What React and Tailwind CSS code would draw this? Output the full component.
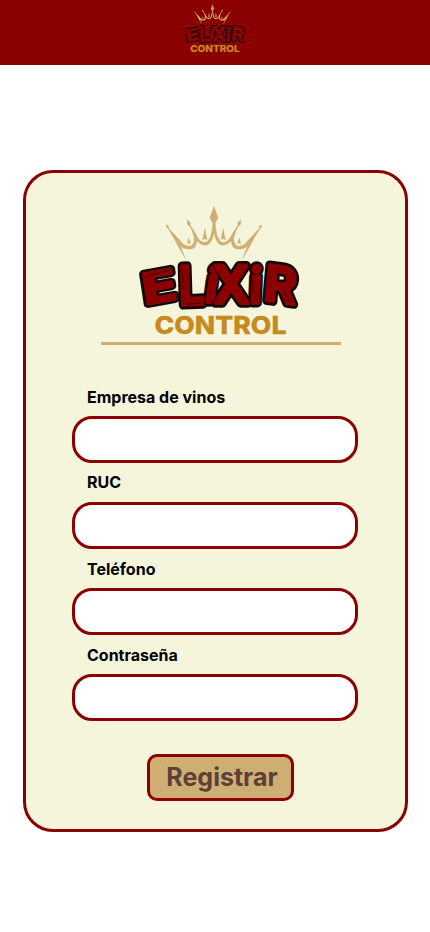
const letters = [
  { ch: 'E', m: 'matrix(1.1 -0.2 0.13 0.84 144.800 304.800)' },
  { ch: 'L', m: 'matrix(0.9 -0.04 0.03 1.06 179.500 305)' },
  { ch: 'i', m: 'matrix(0.9 -0.04 -0.14 0.96 203.500 302.500)' },
  { ch: 'X', m: 'matrix(1 0 0.02 1.03 213.500 303)' },
  { ch: 'R', m: 'matrix(0.98 0.14 -0.09 0.98 263 300)' },
  { ch: 'i', m: 'matrix(0.9 0 -0.04 0.98 249 303)' },
]

function HalfCrown() {
  return (
    <g strokeWidth="0.300" stroke="#cfae74">
      <path d="M167 226.500L180 240.500Q184 246 189 246.300Q194.500 246 194.200 238Q193 231 188.900 225L190 225Q195 232 198 238Q201 243 206 242.300Q210.500 240 212 230L213 222H214V233Q212 243 207 245Q202 246.300 198 242L196.800 241Q196.500 248.500 190.500 249.200Q184 249.500 180.500 246Q182.500 251 185.500 258.800L178 246Q174 238 167 227Z" />
      <path d="M166.600 224.800L168.800 226L168.300 228.300L166.500 227.300Z" />
      <path d="M187 219.500L190.600 223L189.700 226L187.400 224.500Z" />
      <path d="M214 206.500L209.800 217.800L213 223.500H214Z" />
      <path d="M204.900 228.500L207 239.500L204.700 238.700L202.500 240Z" />
      <path d="M188.500 238L190.800 243.500L189 243L187.300 243.800Z" />
    </g>
  )
}

function Logo({ className }) {
  return (
    <svg viewBox="138 205 164 132" className={`overflow-visible ${className}`} role="img" aria-label="Elixir Control">
      <g fill="#cfae74">
        <HalfCrown />
        <g transform="matrix(-1 0 0 1 428 0)">
          <HalfCrown />
        </g>
      </g>
      <g className="font-['Inter',sans-serif] font-semibold" fontSize="50" strokeLinejoin="round">
        <g fill="#120b09" stroke="#120b09" strokeWidth="9">
          {letters.map((l, i) => (
            <text key={i} transform={l.m} aria-hidden="true">{l.ch}</text>
          ))}
        </g>
        <g fill="#8b0000" stroke="#8b0000" strokeWidth="3.800">
          {letters.map((l, i) => (
            <g key={i}>
              <text transform={l.m} fill="#120b09" stroke="#120b09" strokeWidth="5.500" aria-hidden="true">{l.ch}</text>
              <text transform={l.m}>{l.ch}</text>
            </g>
          ))}
        </g>
      </g>
      <g fill="none" stroke="#120b09" strokeWidth="0.600" strokeLinecap="round">
        <path d="M147 276L170 270M182 270L184 290M187 304L200 303M206 281L206 295M253 281V292M283 291L290 301" />
      </g>
      <text x="154.500" y="333.600" fontSize="24.500" textLength="132" lengthAdjust="spacingAndGlyphs" fill="#c68a1e" stroke="#c68a1e" strokeWidth="0.300" className="font-['Inter',sans-serif] font-extrabold">CONTROL</text>
    </svg>
  )
}

function Field({ label, className, gap }) {
  return (
    <label className={`block ${className}`}>
      <span className="block pl-[15px] text-base leading-5 font-bold text-black">{label}</span>
      <input className={`block h-[47px] w-full rounded-[20px] border-3 border-[#8b0000] bg-white px-4 outline-none ${gap}`} />
    </label>
  )
}

export default function App() {
  return (
    <div className="min-h-screen bg-white font-['Inter',sans-serif]">
      <header className="flex h-[65px] justify-center bg-[#8b0000] pt-1">
        <Logo className="h-[49.500px] w-[61.500px]" />
      </header>
      <main className="mt-[105px] ml-[23px] flex h-[662px] w-[385px] flex-col rounded-[30px] border-3 border-[#8b0000] bg-[#f5f5dc] pt-8">
        <Logo className="ml-28 h-[132px] w-[164px] shrink-0" />
        <div className="mt-[5px] ml-[75px] h-[3px] w-[240px] shrink-0 bg-[#cfae74]" />
        <form className="mt-[42px] ml-[46px] w-[286px]">
          <Field label="Empresa de vinos" className="" gap="mt-[9px]" />
          <Field label="RUC" className="mt-[9px]" gap="mt-[10px]" />
          <Field label="Teléfono" className="mt-[10px]" gap="mt-[9px]" />
          <Field label="Contraseña" className="mt-[10px]" gap="mt-[9px]" />
          <button type="button" className="mt-[33px] ml-[75px] flex h-[47px] w-[147px] items-center justify-center rounded-[10px] border-3 border-[#8b0000] bg-[#cfae74] pl-[3px] text-[25px] font-bold text-[#5d4037]">
            Registrar
          </button>
        </form>
      </main>
    </div>
  )
}
